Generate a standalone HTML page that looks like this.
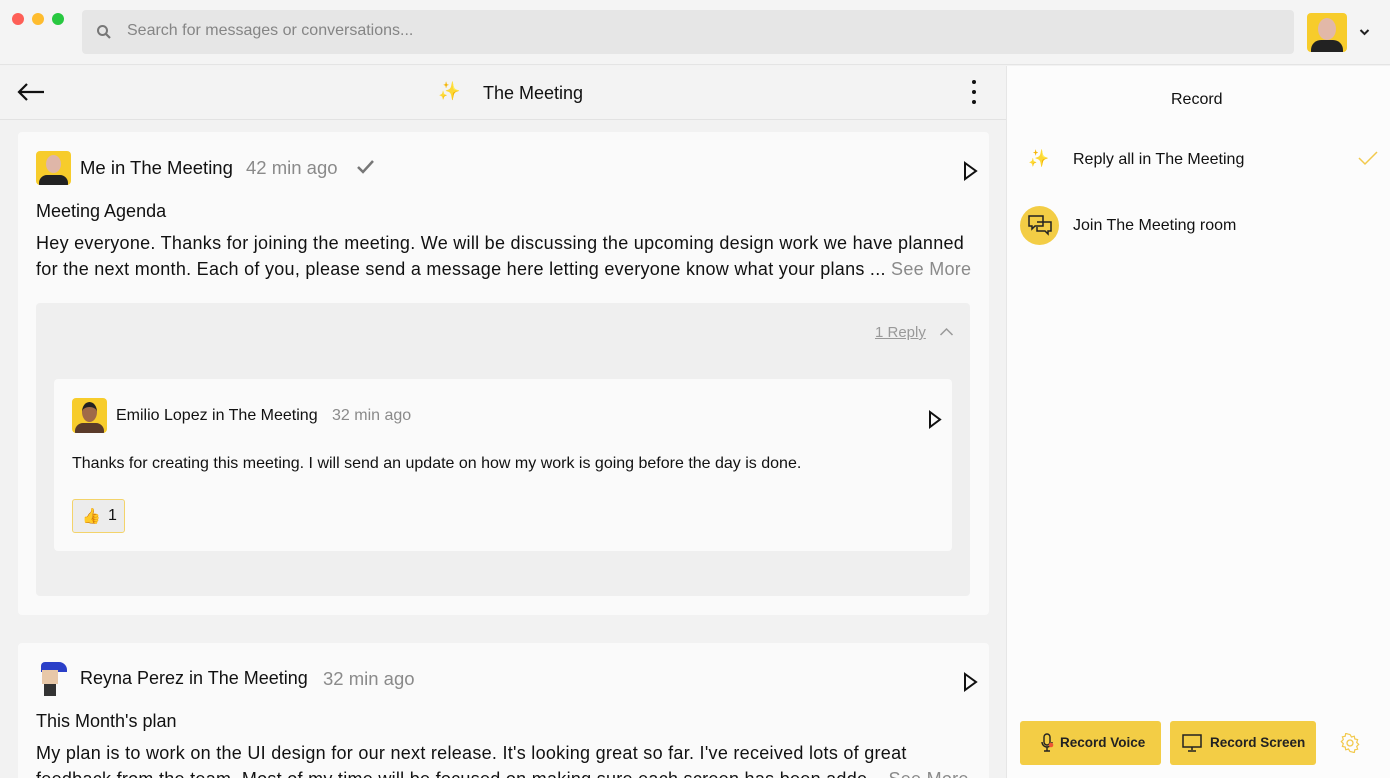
<!DOCTYPE html>
<html style="width:1390px;height:778px;overflow:hidden"><head><style>
*{box-sizing:border-box;margin:0;padding:0}
body{width:1390px;height:778px;overflow:hidden;background:#f2f2f2;font-family:"Liberation Sans",sans-serif;color:#111;position:relative}
.abs{position:absolute}
.dot{position:absolute;top:13px;width:12px;height:12px;border-radius:50%}
.av{position:absolute;border-radius:4px;background:#f7cc2b;overflow:hidden}
.bt{letter-spacing:0.28px}
</style></head><body>
<div class="abs" style="left:0;top:0;width:1390px;height:65px;background:#f4f4f4;border-bottom:1px solid #e4e4e4"></div>
<div class="dot" style="left:12px;background:#fe5f57"></div>
<div class="dot" style="left:32px;background:#febc2e"></div>
<div class="dot" style="left:52px;background:#28c840"></div>
<div class="abs" style="left:82px;top:10px;width:1212px;height:44px;background:#e6e6e6;border-radius:4px"></div>
<svg class="abs" style="left:96px;top:24px" width="16" height="16" viewBox="0 0 16 16"><circle cx="6.5" cy="6.5" r="4.5" fill="none" stroke="#777" stroke-width="2"/><path d="M10 10l4 4" stroke="#777" stroke-width="2.2"/></svg>
<div class="abs" style="left:127px;top:22px;font-size:16px;color:#858585">Search for messages or conversations...</div>
<div class="av" style="left:1307px;top:13px;width:40px;height:39px"><div style="position:absolute;left:11px;top:5px;width:18px;height:22px;border-radius:50%;background:#e2b8a8"></div><div style="position:absolute;left:4px;top:27px;width:32px;height:16px;border-radius:10px 10px 0 0;background:#222"></div></div>
<svg class="abs" style="left:1359px;top:28px" width="11" height="8" viewBox="0 0 11 8"><path d="M1.5 2l4 4 4-4" fill="none" stroke="#222" stroke-width="2"/></svg>

<div class="abs" style="left:0;top:66px;width:1006px;height:54px;background:#f3f3f3;border-bottom:1px solid #e2e2e2"></div>
<svg class="abs" style="left:17px;top:83px" width="28" height="18" viewBox="0 0 28 18"><path d="M27 9H2M10 1L2 9l8 8" fill="none" stroke="#111" stroke-width="2.2"/></svg>
<div class="abs" style="left:438px;top:81px;font-size:18px;color:#f5c94a">✨</div>
<div class="abs" style="left:483px;top:83px;font-size:18px">The Meeting</div>
<div class="abs" style="left:972px;top:80px;width:4px;height:4px;border-radius:50%;background:#111;box-shadow:0 10px 0 #111,0 20px 0 #111"></div>

<div class="abs" style="left:18px;top:132px;width:971px;height:483px;background:#fafafa;border-radius:4px"></div>
<div class="av" style="left:36px;top:151px;width:35px;height:34px"><div style="position:absolute;left:10px;top:4px;width:15px;height:18px;border-radius:50%;background:#dfb6a8"></div><div style="position:absolute;left:3px;top:24px;width:29px;height:12px;border-radius:8px 8px 0 0;background:#222"></div></div>
<div class="abs" style="left:80px;top:157px;font-size:18.5px">Me in The Meeting</div>
<div class="abs" style="left:246px;top:157px;font-size:18.5px;color:#8a8a8a">42 min ago</div>
<svg class="abs" style="left:356px;top:159px" width="19" height="16" viewBox="0 0 19 16"><path d="M2 8l5 5L17 2" fill="none" stroke="#777" stroke-width="2.5"/></svg>
<svg class="abs" style="left:963px;top:161px" width="16" height="20" viewBox="0 0 16 20"><path d="M2 2l11 8-11 8z" fill="none" stroke="#111" stroke-width="2"/></svg>
<div class="abs" style="left:36px;top:201px;font-size:18px">Meeting Agenda</div>
<div class="abs bt" style="left:36px;top:230px;width:940px;font-size:18px;line-height:26px;white-space:nowrap">Hey everyone. Thanks for joining the meeting. We will be discussing the upcoming design work we have planned<br>for the next month. Each of you, please send a message here letting everyone know what your plans ... <span style="color:#8a8a8a">See More</span></div>

<div class="abs" style="left:36px;top:303px;width:934px;height:293px;background:#efefef;border-radius:4px"></div>
<div class="abs" style="left:875px;top:324px;font-size:15px;color:#999;text-decoration:underline">1 Reply</div>
<svg class="abs" style="left:939px;top:327px" width="15" height="10" viewBox="0 0 15 10"><path d="M1.5 8l6-6 6 6" fill="none" stroke="#999" stroke-width="1.5"/></svg>
<div class="abs" style="left:54px;top:379px;width:898px;height:172px;background:#fafafa;border-radius:4px"></div>
<div class="av" style="left:72px;top:398px;width:35px;height:35px"><div style="position:absolute;left:10px;top:4px;width:15px;height:20px;border-radius:50%;background:#a06a48;border-top:5px solid #222"></div><div style="position:absolute;left:3px;top:25px;width:29px;height:12px;border-radius:8px 8px 0 0;background:#5a3b2a"></div></div>
<div class="abs" style="left:116px;top:407px;font-size:16px">Emilio Lopez in The Meeting</div>
<div class="abs" style="left:332px;top:407px;font-size:16px;color:#8a8a8a">32 min ago</div>
<svg class="abs" style="left:928px;top:410px" width="16" height="19" viewBox="0 0 16 19"><path d="M2 2l10 7.5L2 17z" fill="none" stroke="#111" stroke-width="2"/></svg>
<div class="abs" style="left:72px;top:455px;font-size:16px;white-space:nowrap">Thanks for creating this meeting. I will send an update on how my work is going before the day is done.</div>
<div class="abs" style="left:72px;top:499px;width:53px;height:34px;background:#ececec;border:1.5px solid #f3d36a;border-radius:3px"></div>
<div class="abs" style="left:82px;top:507px;font-size:15px;color:#f0c030">👍</div>
<div class="abs" style="left:108px;top:507px;font-size:16px">1</div>

<div class="abs" style="left:18px;top:643px;width:971px;height:135px;background:#fafafa;border-radius:4px 4px 0 0;overflow:hidden">
<div class="abs" style="left:20px;top:19px;width:30px;height:34px"><div style="position:absolute;left:3px;top:0;width:26px;height:10px;background:#2a3fc8;border-radius:4px 8px 0 0"></div><div style="position:absolute;left:4px;top:8px;width:16px;height:14px;background:#e8c8a8"></div><div style="position:absolute;left:6px;top:22px;width:12px;height:12px;background:#333"></div></div>
<div class="abs" style="left:62px;top:25px;font-size:18px">Reyna Perez in The Meeting</div>
<div class="abs" style="left:305px;top:25px;font-size:18.5px;color:#8a8a8a">32 min ago</div>
<svg class="abs" style="left:945px;top:29px" width="16" height="20" viewBox="0 0 16 20"><path d="M2 2l11 8-11 8z" fill="none" stroke="#111" stroke-width="2"/></svg>
<div class="abs" style="left:18px;top:68px;font-size:18px">This Month's plan</div>
<div class="abs bt" style="left:18px;top:97px;width:940px;font-size:18px;line-height:26px;white-space:nowrap">My plan is to work on the UI design for our next release. It's looking great so far. I've received lots of great<br>feedback from the team. Most of my time will be focused on making sure each screen has been adde... <span style="color:#8a8a8a">See More</span></div>
</div>

<div class="abs" style="left:1006px;top:66px;width:384px;height:712px;background:#fcfcfc;border-left:1px solid #e6e6e6"></div>
<div class="abs" style="left:1171px;top:91px;font-size:16px">Record</div>
<div class="abs" style="left:1028px;top:149px;font-size:17px;color:#f5c94a">✨</div>
<div class="abs" style="left:1073px;top:151px;font-size:16px">Reply all in The Meeting</div>
<svg class="abs" style="left:1357px;top:150px" width="22" height="16" viewBox="0 0 22 16"><path d="M2 8l6 6L20 2" fill="none" stroke="#f2c94c" stroke-width="1.5"/></svg>
<div class="abs" style="left:1020px;top:206px;width:39px;height:39px;border-radius:50%;background:#f3cd45"></div>
<svg class="abs" style="left:1027px;top:214px" width="26" height="22" viewBox="0 0 26 22"><path d="M2 2h14v10H8l-3 3v-3H2z M10 8h14v9h-3v3l-3-3h-8v-4" fill="none" stroke="#222" stroke-width="1.5"/></svg>
<div class="abs" style="left:1073px;top:217px;font-size:16px">Join The Meeting room</div>
<div class="abs" style="left:1020px;top:721px;width:141px;height:44px;background:#f3cd45;border-radius:3px"></div>
<svg class="abs" style="left:1040px;top:733px" width="14" height="20" viewBox="0 0 14 20"><rect x="4" y="1" width="6" height="11" rx="3" fill="none" stroke="#222" stroke-width="1.4"/><path d="M2 9a5 5 0 0 0 10 0M7 14v4M4 18h6" fill="none" stroke="#222" stroke-width="1.4"/><circle cx="11" cy="12" r="2.3" fill="#e53"/></svg>
<div class="abs" style="left:1060px;top:735px;font-size:13.5px;font-weight:bold;color:#222">Record Voice</div>
<div class="abs" style="left:1170px;top:721px;width:146px;height:44px;background:#f3cd45;border-radius:3px"></div>
<svg class="abs" style="left:1182px;top:734px" width="20" height="18" viewBox="0 0 20 18"><rect x="1" y="1" width="18" height="12" fill="none" stroke="#222" stroke-width="1.5"/><path d="M10 13v3M6 17h8" stroke="#222" stroke-width="1.5"/></svg>
<div class="abs" style="left:1210px;top:735px;font-size:13.5px;font-weight:bold;color:#222">Record Screen</div>
<svg class="abs" style="left:1340px;top:733px" width="20" height="20" viewBox="0 0 20 20"><circle cx="10" cy="10" r="3" fill="none" stroke="#f2c94c" stroke-width="1.3"/><path d="M10 1.5l1.5 2.5 2.8-.8.5 2.8 2.8.6-.9 2.8 2 2-2 2 .9 2.8-2.8.6-.5 2.8-2.8-.8L10 18.5 8.5 16l-2.8.8-.5-2.8-2.8-.6.9-2.8-2-2 2-2-.9-2.8 2.8-.6.5-2.8 2.8.8z" fill="none" stroke="#f2c94c" stroke-width="1.2"/></svg>
</body></html>
